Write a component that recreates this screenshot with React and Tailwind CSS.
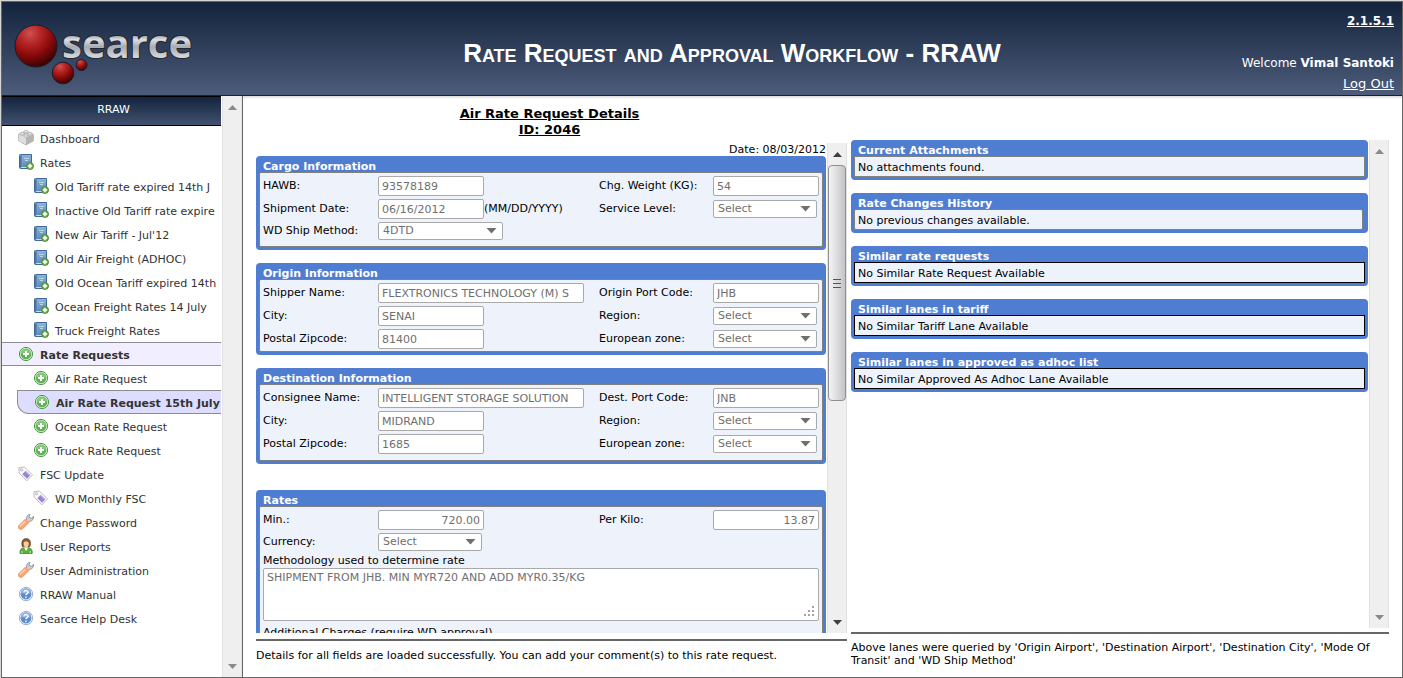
import React, { useId } from "react";

function BrickIcon() {
  return (
    <svg width="16" height="16" viewBox="0 0 16 16" className="shrink-0" aria-hidden="true">
      <path d="M.7 4.2 8 1.4l7.3 2.8v6.6L8 14.9.7 10.8z" fill="#d4d4d4" stroke="#a0a0a0" strokeWidth=".8" strokeLinejoin="round" />
      <path d="M.9 4.4 8 7.4v7.2L.9 10.7z" fill="#dedede" />
      <path d="M15.1 4.4 8 7.4v7.2l7.1-3.9z" fill="#b4b4b4" />
      <path d="M1 4.3 8 1.6l7 2.7-7 3z" fill="#ececec" />
      <g fill="#f7f7f7" stroke="#a0a0a0" strokeWidth=".7">
        <path d="M6 1.6v1.2c0 .6.9 1 2 1s2-.4 2-1V1.6" />
        <ellipse cx="8" cy="1.5" rx="2" ry="1" />
        <path d="M2.2 3.3v1.2c0 .6.9 1 2 1s2-.4 2-1V3.3" />
        <ellipse cx="4.2" cy="3.3" rx="2" ry="1" />
        <path d="M9.8 3.3v1.2c0 .6.9 1 2 1s2-.4 2-1V3.3" />
        <ellipse cx="11.8" cy="3.3" rx="2" ry="1" />
        <path d="M6 5v1.2c0 .6.9 1 2 1s2-.4 2-1V5" />
        <ellipse cx="8" cy="5" rx="2" ry="1" />
      </g>
    </svg>
  );
}

function BookIcon() {
  return (
    <svg width="16" height="16" viewBox="0 0 16 16" className="shrink-0" aria-hidden="true">
      <defs>
        <linearGradient id="cover" x1="0" y1="0" x2="0" y2="1">
          <stop offset="0" stopColor="#8fb4d6" />
          <stop offset="1" stopColor="#5785b6" />
        </linearGradient>
      </defs>
      <path d="M1.500 1.500Q1.500.5 2.500.5h11v14h-11q-1 0-1-1z" fill="url(#cover)" stroke="#40699b" />
      <path d="M2 1.500h2v12H2z" fill="#4a76a8" />
      <path d="M4 1v13" stroke="#88add1" strokeWidth=".6" />
      <path d="M3 13.500h10" stroke="#c8dcee" />
      <path d="M6 4.500h5M7 6.500h3" stroke="#bcd5ec" />
      <circle cx="12" cy="12" r="3.500" fill="#6fae50" stroke="#4a8430" strokeWidth=".9" />
      <path d="M12 9.800v4.400M9.800 12h4.400" stroke="#fff" strokeWidth="1.500" />
    </svg>
  );
}

function PlusIcon() {
  return (
    <svg width="16" height="16" viewBox="0 0 16 16" className="shrink-0" aria-hidden="true">
      <circle cx="8" cy="8" r="6.600" fill="#d9efd3" stroke="#4d9a4a" strokeWidth="1" />
      <circle cx="8" cy="8" r="5.300" fill="#5fb153" />
      <path d="M2.800 7.600a5.200 5.200 0 0 1 10.400 0z" fill="#86c87a" />
      <path d="M8 5v6M5 8h6" stroke="#fff" strokeWidth="2" />
    </svg>
  );
}

function TagIcon() {
  return (
    <svg width="16" height="16" viewBox="0 0 16 16" className="shrink-0" aria-hidden="true">
      <path d="M.8 1.8 6.2 1l8.4 7.8-5.8 6L1.2 7.2z" fill="#fafafa" stroke="#b5b5b5" strokeWidth=".9" strokeLinejoin="round" />
      <circle cx="3.6" cy="3.8" r="1.1" fill="#fff" stroke="#a5a5a5" strokeWidth=".8" />
      <path d="m7.6 4.8 4.8 4.4-3.4 3.5-4.7-4.5z" fill="#9b84d6" />
      <path d="m7.4 5.6 4 3.7" stroke="#bdabea" />
    </svg>
  );
}

function WrenchIcon() {
  return (
    <svg width="16" height="16" viewBox="0 0 16 16" className="shrink-0" aria-hidden="true">
      <path d="M8.600 5.200C8 3 9.400.9 12 .4l-1 2.300.9 1.400 1.700.1L15.400 2.300c.6 2.500-1.100 4.900-3.500 4.900L10 8.600 7.600 6.500z" fill="#d0d0d0" stroke="#8c8c8c" strokeWidth=".9" strokeLinejoin="round" />
      <path d="M7 5.400 10.600 8.800l-5.800 5.900c-1.100 1-2.700 1-3.700.1-1-.9-.9-2.500.1-3.600z" fill="#fba873" stroke="#ec8a58" strokeWidth=".8" />
      <path d="m7 7.400-4.800 4.700" stroke="#ffd0b0" strokeWidth="1.400" strokeLinecap="round" />
    </svg>
  );
}

function UserIcon() {
  return (
    <svg width="16" height="16" viewBox="0 0 16 16" className="shrink-0" aria-hidden="true">
      <path d="M4.200 8.500C3 3.500 4.600.6 8.200.6s5 2.900 3.800 7.900z" fill="#8a5a33" stroke="#6b4020" strokeWidth=".7" />
      <path d="M2 15.400c-.3-3.400 1-5.200 4-5.700h4.300c3 .500 4.200 2.300 3.900 5.700z" fill="#5fb13e" stroke="#37821f" strokeWidth=".8" />
      <path d="m6 9.600 2.100 3.400 2.100-3.400z" fill="#fff" />
      <path d="M5.600 5c.2-1.300 1.300-1.500 2.600-1.700 1.400.2 2.300.7 2.500 1.900.2 2.300-1 4.500-2.500 4.500S5.400 7.300 5.600 5z" fill="#f8cfa0" />
      <path d="M4 15.200v-2.100M12.200 15.200v-2.100" stroke="#c7f0ae" />
    </svg>
  );
}

function HelpIcon() {
  return (
    <svg width="16" height="16" viewBox="0 0 16 16" className="shrink-0" aria-hidden="true">
      <circle cx="8" cy="8" r="6.700" fill="#e9f0f9" stroke="#7c9fcc" strokeWidth=".8" />
      <circle cx="8" cy="8" r="5.400" fill="#5b8bc9" />
      <path d="M2.800 7.500a5.200 5.200 0 0 1 10.400 0z" fill="#86abdb" />
      <path d="M6 6.500c0-2.600 4-2.500 4-.2C10 7.700 8 7.700 8 9.300" fill="none" stroke="#fff" strokeWidth="1.500" />
      <circle cx="8" cy="11.300" r=".9" fill="#fff" />
    </svg>
  );
}

function Logo() {
  return (
    <svg width="190" height="78" viewBox="0 -8 190 78" role="img" aria-label="searce">
      <defs>
        <radialGradient id="ball" cx=".36" cy=".2" r=".85">
          <stop offset="0" stopColor="#cf5050" />
          <stop offset=".3" stopColor="#b52626" />
          <stop offset=".6" stopColor="#8d0b0b" />
          <stop offset="1" stopColor="#300000" />
        </radialGradient>
        <linearGradient id="metal" x1="0" y1="0" x2="0" y2="1">
          <stop offset=".35" stopColor="#8f949b" />
          <stop offset=".45" stopColor="#dcdee2" />
          <stop offset=".58" stopColor="#a6abb2" />
          <stop offset=".75" stopColor="#d0d3d8" />
        </linearGradient>
      </defs>
      <g stroke="#1b1c2b" strokeWidth="1">
        <circle cx="22" cy="27" r="21" fill="url(#ball)" />
        <circle cx="49" cy="54" r="10.800" fill="url(#ball)" />
        <circle cx="67.500" cy="46" r="5.500" fill="url(#ball)" />
      </g>
      <text x="48" y="39" fontFamily="'Open Sans', 'DejaVu Sans', sans-serif" fontSize="40" fontWeight="700" fill="url(#metal)" stroke="#23272f" strokeWidth="2" paintOrder="stroke">
        searce
      </text>
    </svg>
  );
}

const icons = { brick: BrickIcon, book: BookIcon, plus: PlusIcon, tag: TagIcon, wrench: WrenchIcon, user: UserIcon, help: HelpIcon };

const menu = [
  { icon: "brick", label: "Dashboard" },
  { icon: "book", label: "Rates" },
  { icon: "book", label: "Old Tariff rate expired 14th J", sub: true },
  { icon: "book", label: "Inactive Old Tariff rate expire", sub: true },
  { icon: "book", label: "New Air Tariff - Jul'12", sub: true },
  { icon: "book", label: "Old Air Freight (ADHOC)", sub: true },
  { icon: "book", label: "Old Ocean Tariff expired 14th", sub: true },
  { icon: "book", label: "Ocean Freight Rates 14 July", sub: true },
  { icon: "book", label: "Truck Freight Rates", sub: true },
  { icon: "plus", label: "Rate Requests", state: "section" },
  { icon: "plus", label: "Air Rate Request", sub: true },
  { icon: "plus", label: "Air Rate Request 15th July", sub: true, state: "current" },
  { icon: "plus", label: "Ocean Rate Request", sub: true },
  { icon: "plus", label: "Truck Rate Request", sub: true },
  { icon: "tag", label: "FSC Update" },
  { icon: "tag", label: "WD Monthly FSC", sub: true },
  { icon: "wrench", label: "Change Password" },
  { icon: "user", label: "User Reports" },
  { icon: "wrench", label: "User Administration" },
  { icon: "help", label: "RRAW Manual" },
  { icon: "help", label: "Searce Help Desk" },
];

function MenuItem({ icon, label, sub, state }) {
  const Icon = icons[icon];
  let look = sub ? "pl-[31px]" : "pl-4";
  if (state === "section") look = "pl-4 border-y border-[#8c8c94] bg-[#f0eeff] font-bold";
  if (state === "current") look = "ml-[15px] pl-4 border-y border-l border-[#8c8c94] bg-[#dddeff] rounded-bl-xl font-bold";
  return (
    <li>
      <a href="#" className={`flex h-6 items-center gap-[6px] overflow-hidden whitespace-nowrap text-[#333] ${look}`}>
        <Icon />
        <span className="pt-1">{label}</span>
      </a>
    </li>
  );
}

function Arrow({ down, dark }) {
  return (
    <svg width="9" height="5" viewBox="0 0 9 5" aria-hidden="true">
      <path d={down ? "M0 0h9L4.500 5z" : "M0 5h9L4.500 0z"} fill={dark ? "#404040" : "#8a8a8a"} />
    </svg>
  );
}

function ScrollBar({ thumb }) {
  return (
    <div className="ml-px flex w-5 shrink-0 flex-col items-center border-x border-[#e2e2e2] bg-[#efefef]" aria-hidden="true">
      <div className="flex h-[22px] shrink-0 items-center">
        <Arrow dark={thumb} />
      </div>
      <div className="flex w-full flex-1 flex-col">
        {thumb && (
          <div className="flex h-[53%] w-full flex-col items-center justify-center gap-[3px] rounded-sm border border-[#8f8f8f] bg-linear-to-r from-[#f4f4f4] via-[#dcdcde] to-[#c4c4c8]">
            <span className="h-px w-2 bg-[#555]" />
            <span className="h-px w-2 bg-[#555]" />
            <span className="h-px w-2 bg-[#555]" />
          </div>
        )}
      </div>
      <div className="flex h-[22px] shrink-0 items-center">
        <Arrow down dark={thumb} />
      </div>
    </div>
  );
}

function Panel({ title, children, className = "", inner = "border-[#808080] rounded-xs" }) {
  return (
    <section className={`rounded-sm bg-[#4f7dd1] px-[3px] pb-[3px] ${className}`}>
      <h2 className="h-4 pt-[5px] pl-1 font-bold leading-3 text-white">{title}</h2>
      <div className={`relative border bg-[#edf2fb] ${inner}`}>{children}</div>
    </section>
  );
}

function TextField({ label, value, wide, right, note }) {
  const id = useId();
  return (
    <>
      <label htmlFor={id}>{label}</label>
      <div className="flex items-center whitespace-nowrap">
        <input
          id={id}
          type="text"
          disabled
          defaultValue={value}
          className={`h-5 rounded-xs border border-[#a9a9a9] bg-white text-[#6f6f6f] ${wide ? "w-[206px]" : "w-[106px]"} ${right ? "pr-[3px] text-right" : "pl-[3px]"}`}
        />
        {note && <span>{note}</span>}
      </div>
    </>
  );
}

function SelectField({ label, value, wide }) {
  const id = useId();
  return (
    <>
      <label htmlFor={id}>{label}</label>
      <div className={`relative flex ${wide ? "w-[125px]" : "w-[104px]"}`}>
        <select id={id} disabled defaultValue={value} className="h-[18px] w-full appearance-none rounded-xs border border-[#a9a9a9] bg-white pl-1 leading-4 text-[#6f6f6f] opacity-100">
          <option>{value}</option>
        </select>
        <svg width="11" height="6" viewBox="0 0 11 6" className="pointer-events-none absolute top-[6px] right-[6px]" aria-hidden="true">
          <path d="M.5 0h10L5.500 5.500z" fill="#6f6f6f" />
        </svg>
      </div>
    </>
  );
}

function Fields({ children, className = "" }) {
  return <div className={`grid grid-cols-[115px_1fr_114px_106px] items-center gap-y-[3px] px-[3px] pt-[3px] ${className}`}>{children}</div>;
}

function RequestForm() {
  return (
    <form className="min-w-0 flex-1 overflow-y-auto [scrollbar-width:none]">
      <p className="text-right leading-[13px]">Date: 08/03/2012</p>
      <Panel title="Cargo Information">
        <Fields className="pb-[6px]">
          <TextField label="HAWB:" value="93578189" />
          <TextField label="Chg. Weight (KG):" value="54" />
          <TextField label="Shipment Date:" value="06/16/2012" note="(MM/DD/YYYY)" />
          <SelectField label="Service Level:" value="Select" />
          <SelectField label="WD Ship Method:" value="4DTD" wide />
        </Fields>
      </Panel>
      <Panel title="Origin Information" className="mt-[13px]">
        <Fields className="pb-[2px]">
          <TextField label="Shipper Name:" value="FLEXTRONICS TECHNOLOGY (M) S" wide />
          <TextField label="Origin Port Code:" value="JHB" />
          <TextField label="City:" value="SENAI" />
          <SelectField label="Region:" value="Select" />
          <TextField label="Postal Zipcode:" value="81400" />
          <SelectField label="European zone:" value="Select" />
        </Fields>
      </Panel>
      <Panel title="Destination Information" className="mt-[13px]">
        <Fields className="pb-[6px]">
          <TextField label="Consignee Name:" value="INTELLIGENT STORAGE SOLUTION" wide />
          <TextField label="Dest. Port Code:" value="JNB" />
          <TextField label="City:" value="MIDRAND" />
          <SelectField label="Region:" value="Select" />
          <TextField label="Postal Zipcode:" value="1685" />
          <SelectField label="European zone:" value="Select" />
        </Fields>
      </Panel>
      <Panel title="Rates" className="mt-[26px]">
        <Fields>
          <TextField label="Min.:" value="720.00" right />
          <TextField label="Per Kilo:" value="13.87" right />
          <SelectField label="Currency:" value="Select" />
        </Fields>
        <div className="px-[3px] pt-[2px] pb-2">
          <label htmlFor="methodology" className="block leading-[15px]">
            Methodology used to determine rate
          </label>
          <div className="relative flex">
            <textarea
              id="methodology"
              disabled
              defaultValue="SHIPMENT FROM JHB. MIN MYR720 AND ADD MYR0.35/KG"
              className="h-[53px] w-full resize-none rounded-xs border border-[#a9a9a9] bg-white px-[3px] pt-[2px] text-[#6f6f6f]"
            />
            <svg width="12" height="12" viewBox="0 0 12 12" className="pointer-events-none absolute right-1 bottom-1" aria-hidden="true">
              <path d="M9 1h2v2H9zM5 5h2v2H5zM9 5h2v2H9zM1 9h2v2H1zM5 9h2v2H5zM9 9h2v2H9z" fill="#a3a3a3" />
            </svg>
          </div>
          <p className="pt-1 leading-4">Additional Charges (require WD approval)</p>
        </div>
      </Panel>
    </form>
  );
}

const lookups = [
  { title: "Current Attachments", text: "No attachments found.", inner: "border-[#808080]" },
  { title: "Rate Changes History", text: "No previous changes available.", inner: "border-[#808080] rounded-xs mr-[2px]" },
  { title: "Similar rate requests", text: "No Similar Rate Request Available", inner: "border-black" },
  { title: "Similar lanes in tariff", text: "No Similar Tariff Lane Available", inner: "border-black" },
  { title: "Similar lanes in approved as adhoc list", text: "No Similar Approved As Adhoc Lane Available", inner: "border-black" },
];

export default function App() {
  return (
    <div className="h-screen bg-[#d6d6d2] pt-px pl-px font-['DejaVu_Sans',Verdana,sans-serif] text-[11px] leading-[14px] text-black">
      <div className="flex h-full flex-col border border-[#666] bg-white">
        <header className="flex h-[94px] shrink-0 border-b border-[#14213a] bg-linear-to-b from-[#15243d] to-[#4d5c7a] text-white">
          <div className="w-[221px] shrink-0 pt-[9px] pl-3">
            <Logo />
          </div>
          <h1 className="flex-1 self-center pt-2 text-center font-['Liberation_Sans',Arial,sans-serif] text-[26px] leading-7 font-bold [font-variant:small-caps]">
            Rate Request and Approval Workflow - RRAW
          </h1>
          <div className="flex w-[161px] shrink-0 flex-col items-end pt-[10px] pr-2 text-[12px] leading-[18px] whitespace-nowrap">
            <a href="#" className="font-bold underline">2.1.5.1</a>
            <p className="mt-6">
              Welcome <b>Vimal Santoki</b>
            </p>
            <a href="#" className="mt-[3px] text-[13px] underline">Log Out</a>
          </div>
        </header>
        <div className="flex min-h-0 flex-1">
          <aside className="flex w-[241px] shrink-0 border-r border-[#666]">
            <nav className="min-w-0 flex-1 overflow-hidden">
              <h2 className="h-[30px] border-y border-black bg-linear-to-b from-[#15243d] to-[#435270] pt-[6px] pl-1 text-center text-white">
                RRAW
              </h2>
              <ul>
                {menu.map((item) => (
                  <MenuItem key={item.label} {...item} />
                ))}
              </ul>
            </nav>
            <ScrollBar />
          </aside>
          <main className="grid min-w-0 flex-1 grid-cols-[591fr_538fr] grid-rows-[minmax(0,1fr)] gap-x-1 pr-[13px] pl-[13px] shadow-[inset_0_3px_3px_-2px_#ccc]">
            <div className="flex min-w-0 flex-col">
              <h2 className="pt-[10px] pr-1 pb-[5px] text-center text-[13px] leading-4 font-bold underline">
                Air Rate Request Details
                <br />
                ID: 2046
              </h2>
              <div className="flex min-h-0 flex-1">
                <RequestForm />
                <ScrollBar thumb />
              </div>
              <p className="mt-[6px] h-[38px] border-t-2 border-[#666] pt-2">
                Details for all fields are loaded successfully. You can add your comment(s) to this rate request.
              </p>
            </div>
            <div className="flex min-w-0 flex-col pt-11">
              <div className="flex min-h-0 flex-1">
                <div className="flex min-w-0 flex-1 flex-col gap-[13px]">
                  {lookups.map((item) => (
                    <Panel key={item.title} title={item.title} inner={item.inner}>
                      <p className="px-[3px] pt-1 pb-px">{item.text}</p>
                    </Panel>
                  ))}
                </div>
                <ScrollBar />
              </div>
              <p className="mt-1 h-[45px] border-t-2 border-[#666] pt-[7px] leading-[13px]">
                Above lanes were queried by 'Origin Airport', 'Destination Airport', 'Destination City', 'Mode Of Transit' and 'WD Ship Method'
              </p>
            </div>
          </main>
        </div>
      </div>
    </div>
  );
}
